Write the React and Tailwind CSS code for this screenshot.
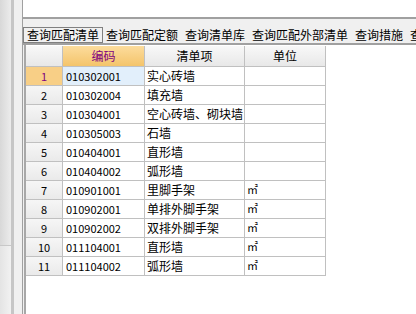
import React from 'react';

const rows = [
  ['1', '010302001', '实心砖墙', ''],
  ['2', '010302004', '填充墙', ''],
  ['3', '010304001', '空心砖墙、砌块墙', ''],
  ['4', '010305003', '石墙', ''],
  ['5', '010404001', '直形墙', ''],
  ['6', '010404002', '弧形墙', ''],
  ['7', '010901001', '里脚手架', '㎡'],
  ['8', '010902001', '单排外脚手架', '㎡'],
  ['9', '010902002', '双排外脚手架', '㎡'],
  ['10', '011104001', '直形墙', '㎡'],
  ['11', '011104002', '弧形墙', '㎡'],
];

const tabs = ['查询匹配定额', '查询清单库', '查询匹配外部清单', '查询措施', '查'];

const App = () => {
  return (
    <div className="flex w-[416px] h-[314px] overflow-hidden bg-[#f0f0f0] text-[12px] leading-[16px] text-black font-['SimSun','Noto_Sans_CJK_SC',sans-serif]">
      {/* left splitter strip */}
      <div className="w-[11px] h-full flex flex-col">
        <div className="h-[245px] bg-gradient-to-r from-[#d8d8d8] to-[#ececec]"></div>
        <div className="flex-1 bg-gradient-to-r from-[#e4e4e4] to-[#f2f2f2] border-t border-[#c8c8c8]"></div>
      </div>
      <div className="w-[3px] h-full bg-[#c6c6c6]"></div>
      <div className="w-[8px] h-full bg-[#f0f0f0]"></div>
      <div className="w-[1px] h-full bg-[#a0a0a0]"></div>

      <div className="flex-1 flex flex-col min-w-0">
        <div className="h-[17px] bg-white"></div>
        <div className="h-[2px] bg-[#a0a0a0]"></div>
        <div className="h-[8px]"></div>

        {/* tabs */}
        <div className="h-[16px] flex whitespace-nowrap overflow-hidden">
          <div className="h-[16px] border border-[#808080] pl-[3px] pr-[3px] leading-[14px]">查询匹配清单</div>
          {tabs.map((t, i) => (
            <div key={i} className="h-[16px] pl-[3px] pr-[4px] leading-[15px] shrink-0">{t}</div>
          ))}
        </div>
        <div className="h-[2px] bg-[#a0a0a0]"></div>

        {/* grid panel */}
        <div className="flex-1 flex">
          <div className="w-[1px] bg-[#f0f0f0]"></div>
          <div className="w-[2px] bg-[#a8a8a8]"></div>
          <div className="flex-1 bg-white pt-[1px]">
            <div className="w-[300px]">
              <div className="flex h-[21px]">
                <div className="w-[37px] border-r border-b border-[#c0c0c0] bg-gradient-to-b from-[#f8f8f8] to-[#e8e8e8]"></div>
                <div className="w-[82px] border-r border-b border-[#c0c0c0] bg-gradient-to-b from-[#fcdc9c] to-[#f4c46a] text-center leading-[20px] text-[#800080]">编码</div>
                <div className="w-[100px] border-r border-b border-[#c0c0c0] bg-gradient-to-b from-[#f8f8f8] to-[#e8e8e8] text-center leading-[20px]">清单项</div>
                <div className="w-[81px] border-r border-b border-[#c0c0c0] bg-gradient-to-b from-[#f8f8f8] to-[#e8e8e8] text-center leading-[20px]">单位</div>
              </div>
              {rows.map((r, i) => (
                <div key={i} className="flex h-[19px]">
                  <div
                    className={
                      i === 0
                        ? 'w-[37px] border-r border-b border-[#c0c0c0] bg-[#f8cf86] text-center text-[11px] leading-[18px] text-[#800080]'
                        : 'w-[37px] border-r border-b border-[#c0c0c0] bg-gradient-to-b from-[#f6f6f6] to-[#eaeaea] text-center text-[11px] leading-[18px]'
                    }
                  >
                    {r[0]}
                  </div>
                  <div
                    className={
                      i === 0
                        ? 'w-[82px] border-r border-b border-[#c0c0c0] bg-[#e2effb] pl-[3px] text-[11px] leading-[18px]'
                        : 'w-[82px] border-r border-b border-[#c0c0c0] pl-[3px] text-[11px] leading-[18px]'
                    }
                  >
                    {r[1]}
                  </div>
                  <div className="w-[100px] border-r border-b border-[#c0c0c0] pl-[2px] leading-[18px] whitespace-nowrap overflow-hidden">{r[2]}</div>
                  <div className="w-[81px] border-r border-b border-[#c0c0c0] pl-[2px] leading-[16px] text-[11px]">{r[3]}</div>
                </div>
              ))}
            </div>
          </div>
        </div>
      </div>
    </div>
  );
};

export default App;
